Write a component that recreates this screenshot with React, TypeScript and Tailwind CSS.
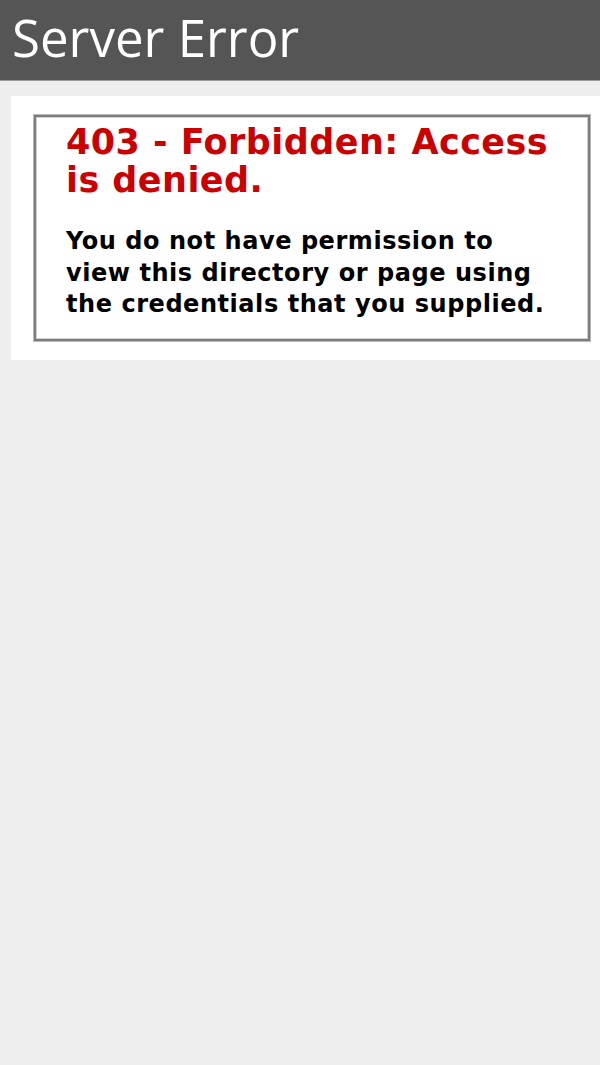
export default function App() {
    return (
        <div className="min-h-[1065px] bg-[#eeeeee] font-['DejaVu_Sans',Verdana,sans-serif]">
            <div className="h-[81px] bg-[#555555] border-b border-[#9a9a9a] pl-3">
                <h1 className="font-['Open_Sans',sans-serif] text-[51px] leading-[74px] text-white font-normal">
                    Server Error
                </h1>
            </div>

            <div className="ml-[11px] mt-[15px] bg-white pl-[23px] pt-[19px] pb-[19px] pr-[10px]">
                <fieldset className="border-2 border-[#7c7c7c] shadow-[0_0_0_1px_#b8b8b8,inset_0_0_0_1px_#cfcfcf] pl-[30px] pr-[30px] pt-[6px] pb-[18px]">
                    <h2 className="text-[35px] leading-[38px] font-bold tracking-[0.45px] text-[#cc0000]">
                        403 - Forbidden: Access is denied.
                    </h2>
                    <h3 className="mt-[27px] text-[24px] leading-[31.5px] font-bold tracking-[0.55px] text-black">
                        You do not have permission to view this directory or page using the credentials that you supplied.
                    </h3>
                </fieldset>
            </div>
        </div>
    )
}
